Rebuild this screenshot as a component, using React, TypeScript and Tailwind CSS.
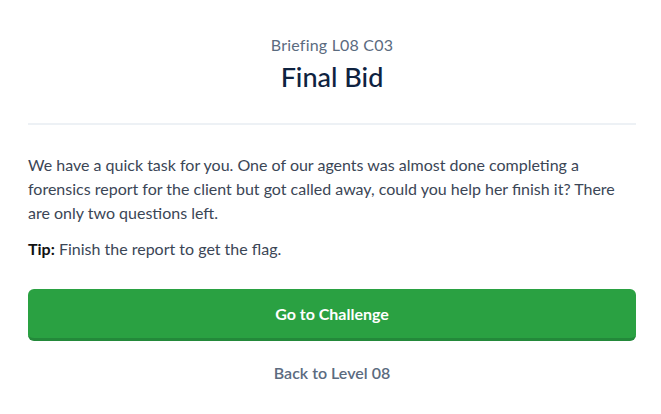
import React from 'react';

const App: React.FC = () => {
  return (
    <div className="min-h-screen bg-white font-['Lato',sans-serif]">
      <div className="pl-[28px] pr-[25px] pt-[35px]">
        {/* Header */}
        <div className="text-center">
          <div className="text-[16px] leading-[20px] tracking-[0.2px] text-[#5b6b7f]">Briefing L08 C03</div>
          <h1 className="mt-[6px] text-[27px] leading-[32px] font-medium text-[#0e2240]">Final Bid</h1>
        </div>

        <div className="mt-[30px] h-[2px] bg-[#edf1f5]" />

        {/* Body */}
        <p className="mt-[28px] text-[16px] leading-[24px] text-[#3b4656]">
          We have a quick task for you. One of our agents was almost done completing a forensics report for the
          client but got called away, could you help her finish it? There are only two questions left.
        </p>
        <p className="mt-[12px] text-[16px] leading-[24px] text-[#3b4656]">
          <span className="font-bold text-[#111]">Tip:</span> Finish the report to get the flag.
        </p>

        <button className="mt-[28px] h-[52px] w-full rounded-[6px] bg-[#2aa142] border-b-[3px] border-[#23893a] text-[16px] font-bold text-white">
          Go to Challenge
        </button>

        <div className="mt-[20px] text-center">
          <a className="text-[16px] font-semibold text-[#5b6b7f]">Back to Level 08</a>
        </div>
      </div>
    </div>
  );
};

export default App;
